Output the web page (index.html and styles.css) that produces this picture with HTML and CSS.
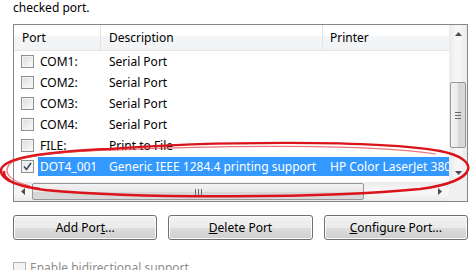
FILE: index.html
```html
<!DOCTYPE html>
<html lang="en">
<head>
    <meta charset="UTF-8">
    <title>Printer Ports</title>
    <link rel="stylesheet" href="styles.css">
</head>
<body>
    <p class="intro">checked port.</p>

    <div class="listbox">
        <div class="viewport">
            <div class="header">
                <div class="col">Port</div>
                <div class="col">Description</div>
                <div class="col">Printer</div>
            </div>
            <div class="row"><span class="check"></span><div class="cells"><span>COM1:</span><span>Serial Port</span><span></span></div></div>
            <div class="row"><span class="check"></span><div class="cells"><span>COM2:</span><span>Serial Port</span><span></span></div></div>
            <div class="row"><span class="check"></span><div class="cells"><span>COM3:</span><span>Serial Port</span><span></span></div></div>
            <div class="row"><span class="check"></span><div class="cells"><span>COM4:</span><span>Serial Port</span><span></span></div></div>
            <div class="row"><span class="check"></span><div class="cells"><span>FILE:</span><span>Print to File</span><span></span></div></div>
            <div class="row"><span class="check checked"><svg width="9" height="9" viewBox="0 0 9 9"><path d="M1 4.5 L3.5 7.5 L8 1" fill="none" stroke="#3b4a66" stroke-width="1.6"/></svg></span><div class="cells selected"><span>DOT4_001</span><span>Generic IEEE 1284.4 printing support</span><span>HP Color LaserJet 3800 PS</span></div></div>
        </div>
        <div class="vscroll">
            <div class="arrow"><svg width="7" height="4" viewBox="0 0 7 4"><path d="M0 4 L3.5 0 L7 4Z" fill="#4d4d4d"/></svg></div>
            <div class="track">
                <div class="vthumb"><span class="grip"></span></div>
            </div>
            <div class="arrow"><svg width="7" height="4" viewBox="0 0 7 4"><path d="M0 0 L3.5 4 L7 0Z" fill="#4d4d4d"/></svg></div>
        </div>
        <div class="hscroll">
            <div class="arrow"><svg width="4" height="7" viewBox="0 0 4 7"><path d="M4 0 L0 3.5 L4 7Z" fill="#4d4d4d"/></svg></div>
            <div class="htrack">
                <div class="hthumb"><span class="hgrip"></span></div>
            </div>
            <div class="arrow"><svg width="4" height="7" viewBox="0 0 4 7"><path d="M0 0 L4 3.5 L0 7Z" fill="#4d4d4d"/></svg></div>
        </div>
        <div class="corner"></div>
    </div>

    <div class="buttons">
        <button>Add Por<u>t</u>...</button>
        <button><u>D</u>elete Port</button>
        <button><u>C</u>onfigure Port...</button>
    </div>

    <label class="option"><span class="check"></span>Enable bidirectional support</label>

    <svg class="mark" width="475" height="270" viewBox="0 0 475 270">
        <path d="M40 189 C10 185 0 177 1 170 C3 158 40 152 110 149 C210 141 380 140 440 151 C481 159 480 181 420 189 C330 198 140 199 45 190 C15 186 3 179 4 171" fill="none" stroke="#d9141a" stroke-width="2.4"/>
        <path d="M30 186 C6 180 2 170 12 162 C30 154 70 151 120 150 C220 145 370 144 436 154" fill="none" stroke="#e23a3e" stroke-width="1.2" opacity="0.7"/>
    </svg>
</body>
</html>
```

FILE: styles.css
```css
body { margin: 0; padding: 0 7px 0 13px; font-family: "Noto Sans", sans-serif; font-size: 12px; color: #000; background: #fff; overflow: hidden; }
.intro { margin: 0; line-height: 16px; }

.listbox { margin-top: 8px; width: 453px; border: 1px solid #828790; display: grid; grid-template-columns: 435px 18px; grid-template-rows: 157px 19px; background: #fff; }
.viewport { overflow: hidden; }
.header { display: grid; grid-template-columns: 87px 222px 126px; height: 25px; border-bottom: 1px solid #e5e5e5; background: linear-gradient(#fff 0, #fff 45%, #f4f5f7 45%, #f2f3f5 100%); }
.header .col { line-height: 25px; padding-left: 8px; border-right: 1px solid #e3e4e6; }
.header .col:nth-child(3) { padding-left: 7px; border-right: 0; }

.row { display: flex; align-items: center; height: 21px; }
.row .check { margin: 0 4px 0 7px; }
.cells { display: grid; grid-template-columns: 63px 222px 150px; line-height: 19px; white-space: nowrap; overflow: hidden; flex: 1; }
.cells span { padding-left: 8px; overflow: hidden; }
.cells span:first-child { padding-left: 2px; }
.cells span:nth-child(3) { padding-left: 7px; }
.selected { background: #3399ff; color: #fff; }

.check { display: inline-flex; align-items: center; justify-content: center; width: 11px; height: 11px; border: 1px solid #8e8f8f; background: linear-gradient(135deg, #dcdcdc, #fbfbfb); box-shadow: inset 0 0 0 1px #f4f4f4; flex: none; }
.check.checked { background: linear-gradient(135deg, #e4e4e4, #fdfdfd); }

.vscroll { display: flex; flex-direction: column; background: linear-gradient(90deg, #eaeaea, #f6f6f6 40%, #f6f6f6 60%, #eaeaea); }
.arrow { height: 18px; flex: none; display: flex; align-items: center; justify-content: center; }
.track { flex: 1; padding-top: 39px; }
.vthumb { height: 64px; margin: 0 1px; border: 1px solid #979797; border-radius: 2px; background: linear-gradient(90deg, #f3f3f3, #e8e8e8 50%, #d6d6d6 51%, #d9d9d9); display: flex; align-items: center; justify-content: center; }
.grip { width: 6px; height: 5px; border-top: 1px solid #6a6a6a; border-bottom: 1px solid #6a6a6a; position: relative; }
.grip::after { content: ""; position: absolute; left: 0; right: 0; top: 2px; border-top: 1px solid #6a6a6a; }

.hscroll { display: flex; background: linear-gradient(#eaeaea, #f6f6f6 40%, #f6f6f6 60%, #eaeaea); }
.hscroll .arrow { width: 18px; height: auto; }
.htrack { flex: 1; padding: 1px 0; }
.hthumb { width: 330px; height: 15px; border: 1px solid #979797; border-radius: 2px; background: linear-gradient(#f3f3f3, #e8e8e8 50%, #d6d6d6 51%, #d9d9d9); display: flex; align-items: center; justify-content: center; }
.hgrip { width: 5px; height: 6px; border-left: 1px solid #6a6a6a; border-right: 1px solid #6a6a6a; position: relative; }
.hgrip::after { content: ""; position: absolute; top: 0; bottom: 0; left: 2px; border-left: 1px solid #6a6a6a; }
.corner { background: #f0f0f0; }

.buttons { display: flex; gap: 11px; margin-top: 13px; width: 455px; }
button { flex: 1; height: 25px; font-family: inherit; font-size: 12px; color: #000; border: 1px solid #707070; border-radius: 3px; background: linear-gradient(#f2f2f2, #ebebeb 50%, #dddddd 51%, #cfcfcf); box-shadow: inset 0 0 0 1px #fcfcfc; padding: 0; }

.option { display: flex; align-items: center; gap: 4px; margin-top: 20px; color: #8d8d8d; line-height: 16px; }
.option .check { border-color: #b1b1b1; background: #f4f4f4; }

.mark { position: absolute; left: 0; top: 0; pointer-events: none; }
```
